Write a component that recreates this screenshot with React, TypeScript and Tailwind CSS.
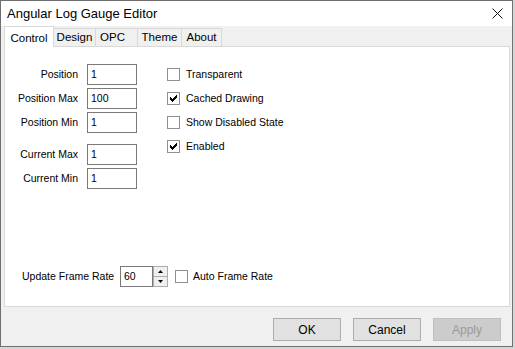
import React from 'react';

// classic 7x7 windows tick, drawn per column
const Tick = () => (
  <svg width="7" height="7" viewBox="0 0 7 7" shapeRendering="crispEdges">
    {[2, 3, 4, 3, 2, 1, 0].map((y, x) => (
      <rect key={x} x={x} y={y} width="1" height="3" fill="#000" />
    ))}
  </svg>
);

const CheckBox = ({ checked }: { checked?: boolean }) => (
  <div className="flex h-[13px] w-[13px] shrink-0 items-center justify-center border border-[#8f8f8f] bg-white">
    {checked && <Tick />}
  </div>
);

const Field = ({ label, value, className = '' }: { label: string; value: string; className?: string }) => (
  <div className={`flex h-[21px] items-center ${className}`}>
    <div className="w-[73px] text-right">{label}</div>
    <div className="ml-[9px] flex h-[21px] w-[50px] items-center border border-[#7a7a7a] bg-white pl-[3px]">{value}</div>
  </div>
);

const Option = ({ label, checked }: { label: string; checked?: boolean }) => (
  <div className="flex h-[21px] items-center">
    <CheckBox checked={checked} />
    <span className="ml-[6px]">{label}</span>
  </div>
);

const tabs = [
  { name: 'Design', w: 'w-[42px]' },
  { name: 'OPC', w: 'w-[42px] pr-[8px]' },
  { name: 'Theme', w: 'w-[44px]' },
  { name: 'About', w: 'w-[40px]' },
];

export default function App() {
  return (
    <div className="h-[349px] w-[515px] bg-[#d6d6d6] font-['Liberation_Sans',Arial,sans-serif] text-black">
      <div className="flex h-[347px] w-[513px] flex-col border border-[#6f6f6f] bg-[#f0f0f0]">
        {/* title bar */}
        <div className="flex h-[25px] items-center bg-white pl-[6px] pr-[9px] text-[13px]">
          <span>Angular Log Gauge Editor</span>
          <svg className="ml-auto" width="11" height="11" viewBox="0 0 11 11">
            <path d="M0.5 0.5 L10.5 10.5 M10.5 0.5 L0.5 10.5" stroke="#111" strokeWidth="1" />
          </svg>
        </div>

        {/* tabs */}
        <div className="flex h-[20px] items-end pl-[3px] text-[11.5px]">
          <div className="relative z-10 -mb-px flex h-[21px] w-[50px] items-start justify-center border-l border-r border-t border-[#d9d9d9] bg-white pt-[3px]">
            Control
          </div>
          {tabs.map((t) => (
            <div
              key={t.name}
              className={`flex h-[18px] items-center justify-center border-r border-t border-[#d9d9d9] bg-[#f0f0f0] pt-px ${t.w}`}
            >
              {t.name}
            </div>
          ))}
        </div>

        {/* panel */}
        <div className="ml-[3px] flex h-[261px] w-[506px] flex-col border border-[#d9d9d9] bg-white text-[10.5px]">
          <div className="flex pt-[17px]">
            <div className="flex flex-col">
              <Field label="Position" value="1" />
              <Field label="Position Max" value="100" className="mt-[3px]" />
              <Field label="Position Min" value="1" className="mt-[3px]" />
              <Field label="Current Max" value="1" className="mt-[11px]" />
              <Field label="Current Min" value="1" className="mt-[3px]" />
            </div>
            <div className="ml-[30px] flex flex-col gap-[3px]">
              <Option label="Transparent" />
              <Option label="Cached Drawing" checked />
              <Option label="Show Disabled State" />
              <Option label="Enabled" checked />
            </div>
          </div>

          <div className="mb-[19px] mt-auto flex h-[21px] items-center pl-[17px]">
            <span className="w-[93px]">Update Frame Rate</span>
            <div className="ml-[5px] flex h-[21px] w-[33px] items-center border border-[#7a7a7a] bg-white pl-[3px]">60</div>
            <div className="flex h-[21px] w-[15px] flex-col">
              <div className="flex h-[11px] items-center justify-center border border-[#adadad] bg-[#f0f0f0]">
                <svg width="5" height="3" viewBox="0 0 5 3">
                  <path d="M2.5 0 L5 3 L0 3 Z" fill="#000" />
                </svg>
              </div>
              <div className="-mt-px flex h-[11px] items-center justify-center border border-[#adadad] bg-[#f0f0f0]">
                <svg width="5" height="3" viewBox="0 0 5 3">
                  <path d="M0 0 L5 0 L2.5 3 Z" fill="#000" />
                </svg>
              </div>
            </div>
            <div className="ml-[7px]">
              <CheckBox />
            </div>
            <span className="ml-[5px]">Auto Frame Rate</span>
          </div>
        </div>

        {/* buttons */}
        <div className="flex justify-end gap-[12px] pr-[11px] pt-[11px] text-[12px]">
          <button className="h-[23px] w-[68px] border border-[#adadad] bg-[#e1e1e1]">OK</button>
          <button className="h-[23px] w-[68px] border border-[#adadad] bg-[#e1e1e1]">Cancel</button>
          <button className="h-[23px] w-[68px] border border-[#bfbfbf] bg-[#cccccc] text-[#9a9a9a]">Apply</button>
        </div>
      </div>
    </div>
  );
}
